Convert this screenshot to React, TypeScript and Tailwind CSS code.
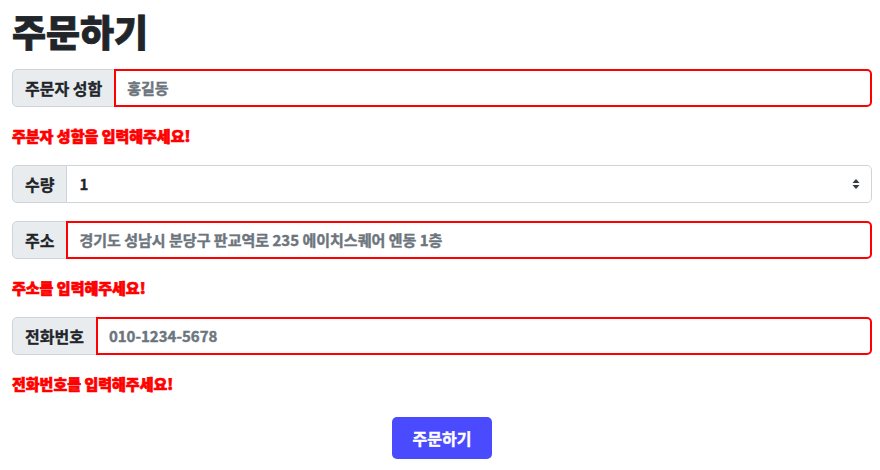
import { useState } from "react";

const FONT = { fontFamily: '"Noto Sans CJK KR", "Noto Sans", sans-serif' };

function UpDown() {
  return (
    <svg width="8" height="12" viewBox="0 0 8 12" className="text-[#343a40]">
      <path d="M4 1 L7.5 5 H0.5 Z" fill="currentColor" />
      <path d="M4 11 L7.5 7 H0.5 Z" fill="currentColor" />
    </svg>
  );
}

function Label({ children }: { children: string }) {
  return (
    <span className="flex h-full shrink-0 items-center rounded-l-[5px] border border-[#ced4da] bg-[#e9ecef] px-[12px] text-[16px] font-bold text-[#212529] [-webkit-text-stroke:0.3px_#212529]">
      {children}
    </span>
  );
}

function Field({ label, value, onChange }: { label: string; value: string; onChange: (v: string) => void }) {
  return (
    <div className="flex h-[38px] w-full items-stretch">
      <Label>{label}</Label>
      <input
        value={value}
        onChange={(e) => onChange(e.target.value)}
        className="-ml-px min-w-0 flex-1 rounded-r-[5px] border-2 border-[#ff0000] bg-white px-[11px] text-[15px] font-bold text-[#6c757d] outline-none [-webkit-text-stroke:0.4px_#6c757d]"
        style={FONT}
      />
    </div>
  );
}

function ErrorText({ children }: { children: string }) {
  return (
    <p className="mb-[18px] h-[22px] text-[15px] leading-[22px] font-black text-[#ff0000] [-webkit-text-stroke:0.7px_#ff0000]">
      {children}
    </p>
  );
}

export default function App() {
  const [name, setName] = useState("홍길동");
  const [qty, setQty] = useState("1");
  const [addr, setAddr] = useState("경기도 성남시 분당구 판교역로 235 에이치스퀘어 엔동 1층");
  const [phone, setPhone] = useState("010-1234-5678");

  return (
    <div className="min-h-[470px] w-[880px] bg-white pt-[7px] pr-[8px] pl-[12px]" style={FONT}>
      <h1 className="mb-[14px] h-[48px] text-[37px] leading-[48px] font-black text-[#212529] [-webkit-text-stroke:0.8px_#212529]">
        주문하기
      </h1>

      <div className="mb-[18px]">
        <Field label="주문자 성함" value={name} onChange={setName} />
      </div>
      <ErrorText>주분자 성함을 입력해주세요!</ErrorText>

      <div className="mb-[18px] flex h-[38px] items-stretch">
        <Label>수량</Label>
        <div className="relative -ml-px flex flex-1 items-center rounded-r-[5px] border border-[#ced4da] bg-white">
          <select
            value={qty}
            onChange={(e) => setQty(e.target.value)}
            className="h-full w-full appearance-none bg-transparent px-[12px] text-[15px] font-bold text-[#212529] outline-none [-webkit-text-stroke:0.3px_#212529]"
            style={FONT}
          >
            {["1", "2", "3", "4", "5"].map((n) => (
              <option key={n} value={n}>
                {n}
              </option>
            ))}
          </select>
          <span className="pointer-events-none absolute top-1/2 right-[11px] -translate-y-1/2">
            <UpDown />
          </span>
        </div>
      </div>

      <div className="mb-[18px]">
        <Field label="주소" value={addr} onChange={setAddr} />
      </div>
      <ErrorText>주소를 입력해주세요!</ErrorText>

      <div className="mb-[18px]">
        <Field label="전화번호" value={phone} onChange={setPhone} />
      </div>
      <ErrorText>전화번호를 입력해주세요!</ErrorText>

      <div className="flex justify-center pt-[4px]">
        <button
          className="h-[42px] w-[100px] rounded-[5px] bg-[#4a4aff] text-[16px] font-bold text-white [-webkit-text-stroke:0.4px_#ffffff]"
          style={FONT}
        >
          주문하기
        </button>
      </div>
    </div>
  );
}
